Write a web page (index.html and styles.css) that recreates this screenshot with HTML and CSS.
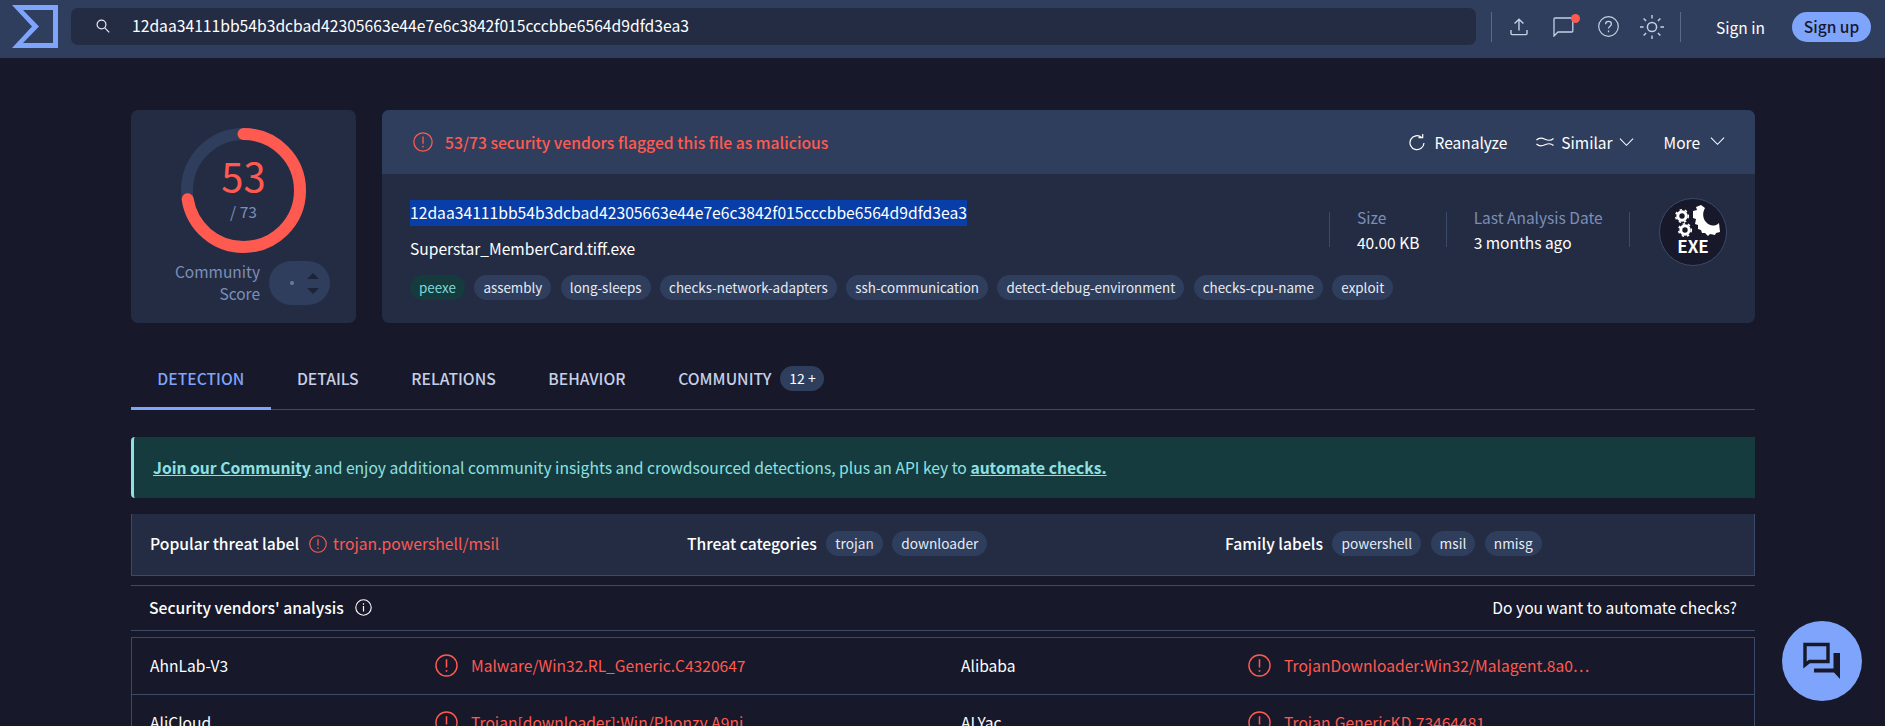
FILE: index.html
```html
<!DOCTYPE html>
<html lang="en">
<head>
    <meta charset="UTF-8">
    <meta name="viewport" content="width=device-width, initial-scale=1.0">
    <title>VirusTotal - File</title>
    <link rel="stylesheet" href="styles.css">
</head>
<body>
    <svg class="defs" width="0" height="0">
        <symbol id="alert" viewBox="0 0 24 24">
            <circle cx="12" cy="12" r="11" fill="none" stroke="currentColor" stroke-width="1.5"/>
            <path d="M12 5.5v8.5M12 16.6v2" fill="none" stroke="currentColor" stroke-width="1.6"/>
        </symbol>
        <symbol id="chevron" viewBox="0 0 16 10">
            <path d="M1 1.5l7 7 7-7" fill="none" stroke="currentColor" stroke-width="1.1"/>
        </symbol>
    </svg>

    <header class="topbar">
        <svg class="logo" width="46" height="43" viewBox="0 0 46 43">
            <path fill="#7fa4fb" fill-rule="evenodd" d="M0 0H46V43H0L20 21.5ZM11 5L27 21.5 11 38H41V5Z"/>
        </svg>
        <div class="search">
            <svg class="search-icon" width="17" height="17" viewBox="0 0 17 17">
                <circle cx="6.5" cy="6.5" r="4.4" fill="none" stroke="#e6ebf5" stroke-width="1.2"/>
                <path d="M9.8 9.8l4.4 4.6" stroke="#e6ebf5" stroke-width="1.2"/>
            </svg>
            <span class="search-text">12daa34111bb54b3dcbad42305663e44e7e6c3842f015cccbbe6564d9dfd3ea3</span>
        </div>
        <div class="tools">
            <svg class="upload" width="18" height="18" viewBox="0 0 18 18">
                <path d="M9 12.5V1.5M4.6 5.6L9 1.2l4.4 4.4M1 12v3.6c0 .6.4 1 1 1h14c.6 0 1-.4 1-1V12" fill="none" stroke="#c5d0e6" stroke-width="1.4"/>
            </svg>
            <span class="chat">
                <svg width="21" height="20" viewBox="0 0 21 20">
                    <path d="M1 19V2c0-.6.4-1 1-1h17.5c.1 0 .3.2.3.4V14c0 .6-.4 1-1 1H5Z" fill="none" stroke="#c5d0e6" stroke-width="1.3"/>
                </svg>
                <i class="dot"></i>
            </span>
            <svg class="help" width="21" height="21" viewBox="0 0 21 21">
                <circle cx="10.5" cy="10.5" r="9.8" fill="none" stroke="#c5d0e6" stroke-width="1.2"/>
                <path d="M7.6 8.2c0-1.7 1.2-2.8 2.9-2.8s2.9 1 2.9 2.6c0 2.3-2.9 2.2-2.9 4.6M10.5 14.5v1.7" fill="none" stroke="#c5d0e6" stroke-width="1.3"/>
            </svg>
            <svg class="sun" width="24" height="24" viewBox="0 0 24 24">
                <circle cx="12" cy="12" r="4.6" fill="none" stroke="#c5d0e6" stroke-width="1.5"/>
                <path d="M12 0v3.6M12 20.4V24M0 12h3.6M20.4 12H24M3.6 3.6l2.5 2.5M17.9 17.9l2.5 2.5M3.6 20.4l2.5-2.5M17.9 6.1l2.5-2.5" stroke="#c5d0e6" stroke-width="1.4"/>
            </svg>
        </div>
        <a class="signin">Sign in</a>
        <a class="signup">Sign up</a>
    </header>

    <main class="page">
        <section class="summary">
            <div class="score-card">
                <div class="gauge">
                    <svg width="125" height="125" viewBox="0 0 125 125">
                        <circle cx="62.5" cy="62.5" r="56.5" fill="none" stroke="#2f3e5c" stroke-width="12"/>
                        <circle cx="62.5" cy="62.5" r="56.5" fill="none" stroke="#ff5a50" stroke-width="12" stroke-linecap="round" stroke-dasharray="257 355" transform="rotate(-90 62.5 62.5)"/>
                    </svg>
                    <div class="gauge-text">
                        <span class="positives">53</span>
                        <span class="total">/ 73</span>
                    </div>
                </div>
                <div class="community-score">
                    <span class="community-label">Community<br>Score</span>
                    <div class="vote">
                        <i class="vote-dot"></i>
                        <span class="vote-arrows"><i class="arrow-up"></i><i class="arrow-down"></i></span>
                    </div>
                </div>
            </div>

            <div class="file-card">
                <div class="file-head">
                    <svg class="alert-head" width="20" height="20"><use href="#alert"/></svg>
                    <span class="flagged">53/73 security vendors flagged this file as malicious</span>
                    <div class="actions">
                        <a class="action reanalyze">
                            <svg width="16" height="17" viewBox="0 0 16 17">
                                <path d="M12.6 3.4A7 7 0 1 0 15 9" fill="none" stroke="#fff" stroke-width="1.2"/>
                                <path d="M9.5 3.6h4.2V0" fill="none" stroke="#fff" stroke-width="1.2"/>
                            </svg>
                            Reanalyze
                        </a>
                        <a class="action similar">
                            <svg width="18" height="12" viewBox="0 0 18 12">
                                <path d="M0.5 4c2.500-2.500 5-2.500 8.500-.8s6 1.700 8.500-.7M0.500 8c2.500 2.500 5 2.500 8.500.8s6-1.700 8.500.7" fill="none" stroke="#fff" stroke-width="1.100"/>
                            </svg>
                            Similar
                            <svg class="chev" width="15" height="10"><use href="#chevron"/></svg>
                        </a>
                        <a class="action more">
                            More
                            <svg class="chev more-chev" width="15" height="10"><use href="#chevron"/></svg>
                        </a>
                    </div>
                </div>
                <div class="file-body">
                    <div class="file-main">
                        <div class="hash"><span class="selected">12daa34111bb54b3dcbad42305663e44e7e6c3842f015cccbbe6564d9dfd3ea3</span></div>
                        <div class="filename">Superstar_MemberCard.tiff.exe</div>
                        <div class="tags">
                            <span class="tag tag-green">peexe</span>
                            <span class="tag">assembly</span>
                            <span class="tag">long-sleeps</span>
                            <span class="tag">checks-network-adapters</span>
                            <span class="tag">ssh-communication</span>
                            <span class="tag">detect-debug-environment</span>
                            <span class="tag">checks-cpu-name</span>
                            <span class="tag">exploit</span>
                        </div>
                    </div>
                    <div class="file-meta size">
                        <span class="meta-label">Size</span>
                        <span class="meta-value">40.00 KB</span>
                    </div>
                    <div class="file-meta date">
                        <span class="meta-label">Last Analysis Date</span>
                        <span class="meta-value">3 months ago</span>
                    </div>
                    <div class="file-type">
                        <svg width="68" height="68" viewBox="0 0 68 68">
                            <circle cx="34" cy="34" r="33.5" fill="#17182a" stroke="#3b4a68"/>
                            <circle cx="23" cy="18" r="4.2" fill="none" stroke="#fff" stroke-width="3"/>
                            <circle cx="23" cy="18" r="6.3" fill="none" stroke="#fff" stroke-width="1.6" stroke-dasharray="2.4 2.9"/>
                            <circle cx="26" cy="32" r="4.2" fill="none" stroke="#fff" stroke-width="3"/>
                            <circle cx="26" cy="32" r="6.3" fill="none" stroke="#fff" stroke-width="1.6" stroke-dasharray="2.4 2.9"/>
                            <path fill="#fff" d="M34 13L38 12 37 9 42 7 46 10C43 15 44 21 47 24 50 28 56 29 60 25L61 34 57 35 56 37 51 36 49 38 46 35 43 35 42 32 39 31 39 27 36 26 37 21 34 20Z"/>
                            <text class="exe" x="34" y="55" text-anchor="middle">EXE</text>
                        </svg>
                    </div>
                </div>
            </div>
        </section>

        <nav class="tabs">
            <a class="tab active">DETECTION</a>
            <a class="tab">DETAILS</a>
            <a class="tab">RELATIONS</a>
            <a class="tab">BEHAVIOR</a>
            <a class="tab community">COMMUNITY <span class="count">12 +</span></a>
        </nav>

        <div class="banner">
            <a class="banner-link">Join our Community</a>&nbsp;and enjoy additional community insights and crowdsourced detections, plus an API key to&nbsp;<a class="banner-link">automate checks.</a>
        </div>

        <div class="threat">
            <div class="threat-col">
                <strong>Popular threat label</strong>
                <svg class="alert-small" width="18" height="18"><use href="#alert"/></svg>
                <span class="threat-name">trojan.powershell/msil</span>
            </div>
            <div class="threat-col">
                <strong>Threat categories</strong>
                <span class="tag">trojan</span>
                <span class="tag">downloader</span>
            </div>
            <div class="threat-col">
                <strong>Family labels</strong>
                <span class="tag">powershell</span>
                <span class="tag">msil</span>
                <span class="tag">nmisg</span>
            </div>
        </div>

        <div class="analysis-head">
            <strong>Security vendors' analysis</strong>
            <svg class="info" width="17" height="17" viewBox="0 0 17 17">
                <circle cx="8.5" cy="8.5" r="7.7" fill="none" stroke="#fff" stroke-width="1.1"/>
                <path d="M8.5 7v5.5M8.5 4.2v1.6" stroke="#fff" stroke-width="1.2"/>
            </svg>
            <span class="automate">Do you want to automate checks?</span>
        </div>

        <div class="vendors">
            <div class="vendor-row">
                <div class="vendor-name">AhnLab-V3</div>
                <div class="vendor-result"><svg width="23" height="23"><use href="#alert"/></svg><span>Malware/Win32.RL_Generic.C4320647</span></div>
                <div class="vendor-name">Alibaba</div>
                <div class="vendor-result"><svg width="23" height="23"><use href="#alert"/></svg><span>TrojanDownloader:Win32/Malagent.8a0…</span></div>
            </div>
            <div class="vendor-row">
                <div class="vendor-name">AliCloud</div>
                <div class="vendor-result"><svg width="23" height="23"><use href="#alert"/></svg><span>Trojan[downloader]:Win/Phonzy.A9nj</span></div>
                <div class="vendor-name">ALYac</div>
                <div class="vendor-result"><svg width="23" height="23"><use href="#alert"/></svg><span>Trojan.GenericKD.73464481</span></div>
            </div>
        </div>
    </main>

    <button class="fab">
        <svg width="40" height="40" viewBox="0 0 40 40">
            <path d="M3 24V3.5h23v17H7.5L3 24Z" fill="none" stroke="#17182a" stroke-width="3.4"/>
            <path d="M31.5 12h6.5v26l-6-6.5H12v-4h19.5Z" fill="#17182a"/>
        </svg>
    </button>
</body>
</html>
```

FILE: styles.css
```css
* {
    box-sizing: border-box;
}
html, body {
    height: 726px;
    overflow: hidden;
}
body {
    margin: 0;
    background: #17182a;
    color: #fff;
    font-family: "Noto Sans CJK SC", "Noto Sans", sans-serif;
    font-size: 15px;
}
.defs {
    position: absolute;
}
i {
    display: block;
}

/* top bar */
.topbar {
    display: flex;
    align-items: center;
    height: 58px;
    background: #2f3e5c;
    padding: 0 14px 5px 12px;
}
.logo {
    flex: none;
    margin-right: 13px;
}
.search {
    flex: 1;
    display: flex;
    align-items: center;
    height: 37px;
    background: #242c44;
    border-radius: 7px;
}
.search-icon {
    margin-left: 24px;
    margin-right: 20px;
}
.search-text {
    font-size: 15.68px;
    margin-top: -2px;
}
.tools {
    display: flex;
    align-items: center;
    height: 30px;
    margin-left: 15px;
    padding: 0 16px 0 18px;
    border-left: 1px solid #5a6a8a;
    border-right: 1px solid #5a6a8a;
}
.upload {
    margin-right: 25px;
}
.chat {
    position: relative;
    display: block;
    height: 20px;
    margin-right: 24px;
}
.dot {
    position: absolute;
    top: -3px;
    right: -6px;
    width: 9px;
    height: 9px;
    border-radius: 50%;
    background: #ff5a50;
}
.help {
    margin-right: 21px;
}
.signin {
    margin-left: 35px;
    font-size: 15.5px;
}
.signup {
    margin-left: 27px;
    width: 79px;
    height: 30px;
    line-height: 29px;
    text-align: center;
    border-radius: 15px;
    background: #7fa4fb;
    color: #17182a;
    font-size: 15.5px;
    font-weight: 500;
}

/* page */
.page {
    margin: 0 130px 0 131px;
    padding-top: 52px;
}
.summary {
    display: flex;
    gap: 26px;
    height: 213px;
}
.score-card {
    flex: none;
    width: 225px;
    background: #242c44;
    border-radius: 7px;
    padding-top: 18px;
}
.gauge {
    position: relative;
    width: 125px;
    height: 125px;
    margin-left: 50px;
}
.gauge svg {
    display: block;
}
.gauge-text {
    position: absolute;
    inset: 0;
    display: flex;
    flex-direction: column;
    align-items: center;
}
.positives {
    margin-top: 24px;
    font-size: 40px;
    line-height: 46px;
    font-weight: 400;
    color: #ff5a50;
}
.total {
    margin-top: 3px;
    font-size: 15.5px;
    line-height: 20px;
    color: #7a8fb8;
}
.community-score {
    display: flex;
    align-items: center;
    margin-top: 8px;
    padding-left: 15px;
}
.community-label {
    width: 114px;
    margin-top: -2px;
    text-align: right;
    font-size: 15.5px;
    line-height: 22px;
    color: #7a8fb8;
}
.vote {
    display: flex;
    align-items: center;
    width: 61px;
    height: 44px;
    margin-left: 9px;
    border-radius: 22px;
    background: #2f3e5c;
    padding-left: 21px;
}
.vote-dot {
    width: 4px;
    height: 4px;
    border-radius: 50%;
    background: #6b7a96;
}
.vote-arrows {
    display: flex;
    flex-direction: column;
    gap: 9px;
    margin-left: 13px;
}
.arrow-up, .arrow-down {
    width: 0;
    height: 0;
    border-left: 6px solid transparent;
    border-right: 6px solid transparent;
}
.arrow-up {
    border-bottom: 6px solid #1d2338;
}
.arrow-down {
    border-top: 6px solid #1d2338;
}

/* file card */
.file-card {
    flex: 1;
    background: #242c44;
    border-radius: 7px;
    overflow: hidden;
}
.file-head {
    display: flex;
    align-items: center;
    height: 64px;
    background: #2f3e5c;
    padding: 0 30px 0 31px;
}
.alert-head {
    color: #ff5a50;
    flex: none;
}
.flagged {
    margin-left: 12px;
    color: #ff5a50;
    font-size: 15.7px;
    font-weight: 500;
}
.actions {
    margin-left: auto;
    display: flex;
    align-items: center;
    font-size: 15.5px;
}
.action {
    display: flex;
    align-items: center;
}
.reanalyze svg {
    margin-right: 10px;
}
.similar {
    margin-left: 29px;
}
.similar svg:first-child {
    margin-right: 7px;
}
.chev {
    margin-left: 6px;
}
.more {
    margin-left: 30px;
}
.more-chev {
    margin-left: 10px;
    margin-top: -3px;
}
.file-body {
    display: flex;
    align-items: flex-start;
    padding: 26px 28px 0 28px;
}
.file-main {
    width: 919px;
}
.hash {
    height: 26px;
}
.selected {
    display: inline-block;
    height: 26px;
    line-height: 25px;
    background: #083ea8;
    font-size: 15.68px;
}
.filename {
    margin-top: 10px;
    height: 24px;
    line-height: 24px;
    font-size: 15.6px;
}
.tags {
    display: flex;
    gap: 9.5px;
    margin-top: 15px;
}
.tag {
    display: inline-block;
    height: 25px;
    line-height: 24px;
    padding: 0 9px;
    border-radius: 13px;
    background: #2f3e5c;
    color: #e6ebf5;
    font-size: 13.4px;
    white-space: nowrap;
}
.threat .tag {
    font-size: 13.7px;
}
.tag-green {
    background: #153b3f;
    color: #7fd8d8;
}
.file-meta {
    display: flex;
    flex-direction: column;
    justify-content: center;
    gap: 5px;
    height: 35px;
    margin-top: 12px;
    border-left: 1px solid #3b4a68;
    padding-left: 27px;
}
.size {
    width: 117px;
}
.date {
    width: 185px;
    border-right: 1px solid #3b4a68;
}
.meta-label {
    color: #7a8fb8;
    font-size: 15.5px;
    line-height: 20px;
}
.meta-value {
    font-size: 15.5px;
    line-height: 20px;
}
.file-type {
    flex: none;
    margin: -2px 0 0 29px;
}
.file-type svg {
    display: block;
}
.exe {
    fill: #fff;
    font-size: 17px;
    font-weight: 700;
}

/* tabs */
.tabs {
    display: flex;
    height: 87px;
    align-items: flex-end;
    border-bottom: 1px solid #3b4a68;
}
.tab {
    display: flex;
    align-items: center;
    height: 66px;
    padding: 5px 26.3px 0;
    color: #c5d0e6;
    font-size: 15.7px;
    font-weight: 500;
    border-bottom: 3px solid transparent;
    margin-bottom: -1px;
}
.tab.active {
    color: #7fa4fb;
    border-bottom-color: #7fa4fb;
}
.count {
    margin-left: 9px;
    width: 44px;
    height: 25px;
    line-height: 24px;
    text-align: center;
    border-radius: 13px;
    background: #2f3e5c;
    color: #fff;
    font-size: 14px;
    font-weight: 400;
}

/* banner */
.banner {
    display: flex;
    align-items: center;
    height: 61px;
    margin-top: 27px;
    padding-left: 19px;
    background: #153b3f;
    border-left: 3px solid #8fe0e0;
    border-radius: 4px 0 0 4px;
    color: #8fe0e0;
    font-size: 15.66px;
}
.banner-link {
    font-weight: 700;
    text-decoration: underline;
}

/* threat box */
.threat {
    display: grid;
    grid-template-columns: 537px 538px 1fr;
    align-items: center;
    height: 62px;
    margin-top: 16px;
    padding: 0 0 2px 18px;
    background: #242c44;
    border: 1px solid #3b4a68;
    border-top: 0;
}
.threat-col {
    display: flex;
    align-items: center;
    gap: 9.5px;
}
.threat-col strong {
    font-weight: 500;
    font-size: 15.7px;
}
.alert-small {
    color: #ff5a50;
}
.threat-name {
    color: #ff5a50;
    margin-left: -3px;
    font-size: 15.7px;
}

/* vendor table */
.analysis-head {
    display: flex;
    align-items: center;
    height: 46px;
    margin-top: 9px;
    padding: 0 18px 2px;
    border-top: 1px solid #3b4a68;
    border-bottom: 1px solid #3b4a68;
}
.analysis-head strong {
    font-weight: 500;
    font-size: 15.7px;
}
.info {
    margin-left: 11px;
}
.automate {
    margin-left: auto;
    font-size: 15.65px;
}
.vendors {
    margin-top: 6px;
    border: 1px solid #3b4a68;
}
.vendor-row {
    display: grid;
    grid-template-columns: 285px 526px 287px 1fr;
    align-items: center;
    height: 57px;
    border-bottom: 1px solid #3b4a68;
    padding: 0 0 2px 18px;
    font-size: 15.6px;
}
.vendor-result {
    display: flex;
    align-items: center;
    gap: 13px;
    color: #ff5a50;
}
.vendor-result svg {
    flex: none;
}

/* floating help */
.fab {
    position: fixed;
    left: 1782px;
    top: 621px;
    width: 80px;
    height: 80px;
    border: 0;
    border-radius: 50%;
    background: #7fa4fb;
    padding: 0;
    display: flex;
    align-items: center;
    justify-content: center;
}
```
